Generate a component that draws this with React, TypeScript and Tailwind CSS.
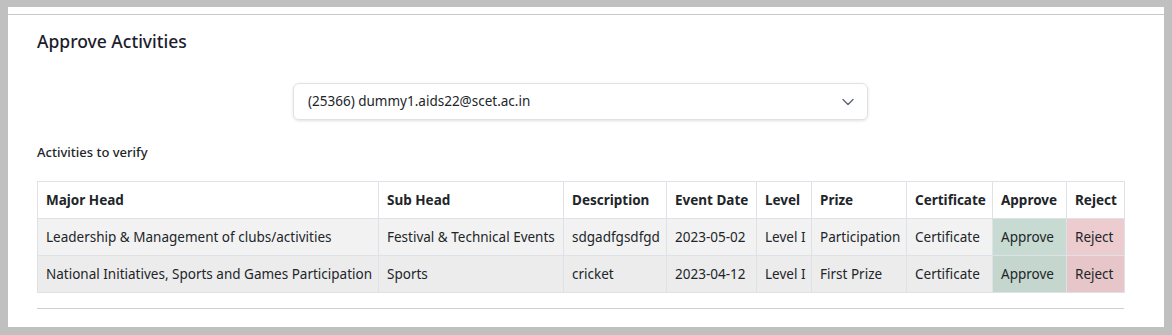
import React from "react";

const rows = [
  {
    major: "Leadership & Management of clubs/activities",
    sub: "Festival & Technical Events",
    desc: "sdgadfgsdfgd",
    date: "2023-05-02",
    level: "Level I",
    prize: "Participation",
    bg: "bg-[#f2f2f2]",
    ok: "bg-[#c7dbd2]",
    no: "bg-[#ecccce]",
  },
  {
    major: "National Initiatives, Sports and Games Participation",
    sub: "Sports",
    desc: "cricket",
    date: "2023-04-12",
    level: "Level I",
    prize: "First Prize",
    bg: "bg-[#ececec]",
    ok: "bg-[#c4d6ce]",
    no: "bg-[#e6c6c8]",
  },
];

const cols = [
  { name: "Major Head", w: "w-[341px]" },
  { name: "Sub Head", w: "w-[185px]" },
  { name: "Description", w: "w-[103px]" },
  { name: "Event Date", w: "w-[90px]" },
  { name: "Level", w: "w-[55px]" },
  { name: "Prize", w: "w-[95px]" },
  { name: "Certificate", w: "w-[86px]" },
  { name: "Approve", w: "w-[74px]" },
  { name: "Reject", w: "w-[58px]" },
];

export default function App() {
  const td = "border border-[#dee2e6] px-2 h-[37px] whitespace-nowrap overflow-hidden";
  return (
    <div
      className="min-h-[335px] bg-[#c0c0c0] pt-[7px] pb-[8px] pl-[8px] pr-[8px] text-[#212529]"
      style={{ fontFamily: "'Noto Sans', 'Open Sans', sans-serif" }}
    >
      <div className="bg-white h-[320px] pt-[7px]">
        <div className="border-t border-[#c8c8c8] px-[29px]">
          <h1 className="pt-[14px] text-[17.5px] leading-[24px] font-medium text-[#1c1c2c]">
            Approve Activities
          </h1>
          <div className="mt-[30px] w-[1087px] flex justify-center">
            <div className="w-[575px] h-[37px] rounded-[6px] border border-[#dee2e6] shadow-[0_1px_3px_rgba(0,0,0,0.12)] flex items-center justify-between pl-[14px] pr-[12px] text-[13.5px]">
              <span>(25366) dummy1.aids22@scet.ac.in</span>
              <svg width="14" height="10" viewBox="0 0 16 12" fill="none">
                <path d="m2 3 6 6 6-6" stroke="#59657a" strokeWidth="1.6" strokeLinecap="round" strokeLinejoin="round" />
              </svg>
            </div>
          </div>
          <div className="mt-[23px] text-[13px] leading-[18px] font-medium">Activities to verify</div>
          <table className="mt-[20px] table-fixed border-collapse w-[1087px] text-[13.5px]">
            <thead>
              <tr>
                {cols.map((c) => (
                  <th key={c.name} className={`${td} ${c.w} text-left font-bold`}>
                    {c.name}
                  </th>
                ))}
              </tr>
            </thead>
            <tbody>
              {rows.map((r) => (
                <tr key={r.major}>
                  <td className={`${td} ${r.bg}`}>{r.major}</td>
                  <td className={`${td} ${r.bg}`}>{r.sub}</td>
                  <td className={`${td} ${r.bg}`}>{r.desc}</td>
                  <td className={`${td} ${r.bg}`}>{r.date}</td>
                  <td className={`${td} ${r.bg}`}>{r.level}</td>
                  <td className={`${td} ${r.bg}`}>{r.prize}</td>
                  <td className={`${td} ${r.bg}`}>Certificate</td>
                  <td className={`${td} ${r.ok}`}>Approve</td>
                  <td className={`${td} ${r.no}`}>Reject</td>
                </tr>
              ))}
            </tbody>
          </table>
          <div className="mt-[15px] w-[1087px] border-t border-[#cfcfcf]" />
        </div>
      </div>
    </div>
  );
}
